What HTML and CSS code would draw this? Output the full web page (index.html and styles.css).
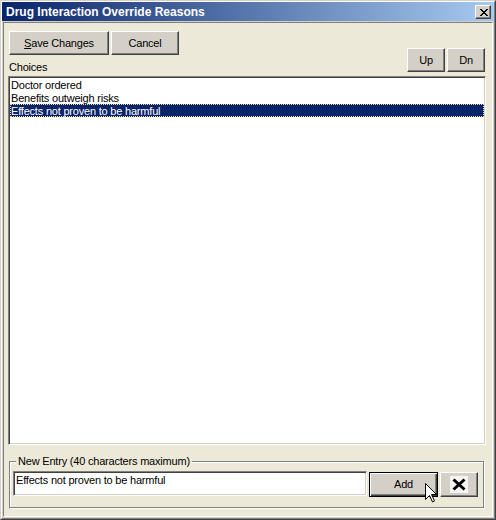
FILE: index.html
```html
<!DOCTYPE html>
<html lang="en">
<head>
<meta charset="utf-8">
<title>Drug Interaction Override Reasons</title>
<link rel="stylesheet" href="styles.css">
</head>
<body>
<div class="window">
  <div class="frame">
    <div class="titlebar">
      <span class="title">Drug Interaction Override Reasons</span>
      <button class="close" aria-label="Close">
        <svg width="8" height="7" viewBox="0 0 8 7" shape-rendering="crispEdges"><path d="M0 0h2v1H0z M6 0h2v1H6z M1 1h2v1H1z M5 1h2v1H5z M2 2h4v1H2z M3 3h2v1H3z M2 4h4v1H2z M1 5h2v1H1z M5 5h2v1H5z M0 6h2v1H0z M6 6h2v1H6z" fill="#000"/></svg>
      </button>
    </div>
    <div class="client">
      <div class="toolbar">
        <div class="left">
          <div class="btnrow">
            <button class="btn save"><u>S</u>ave Changes</button>
            <button class="btn cancel">Cancel</button>
          </div>
          <div class="label">Choices</div>
        </div>
        <div class="updn">
          <button class="btn small">Up</button>
          <button class="btn small">Dn</button>
        </div>
      </div>
      <ul class="listbox">
        <li>Doctor ordered</li>
        <li>Benefits outweigh risks</li>
        <li class="sel">Effects not proven to be harmful</li>
      </ul>
      <fieldset class="group">
        <legend>New Entry (40 characters maximum)</legend>
        <div class="entry">
          <div class="input">Effects not proven to be harmful</div>
          <button class="btn add">Add</button>
          <button class="btn del" aria-label="Delete">
            <svg width="18" height="17" viewBox="0 0 18 17"><rect x="0" y="0" width="18" height="17" fill="#f4f4f2"/><path d="M3.5 3.5 L14.5 13.5 M14.5 3.5 L3.5 13.5" stroke="#000" stroke-width="3"/></svg>
          </button>
        </div>
      </fieldset>
    </div>
  </div>
</div>
<svg class="cursor" width="13" height="20" viewBox="0 0 13 20"><path d="M0.5 0.5 V16.5 L4.5 12.5 L7.5 19 L9.5 18 L6.5 11.5 H11.5 Z" fill="#fff" stroke="#000" stroke-width="1" stroke-linejoin="miter"/></svg>
</body>
</html>
```
FILE: styles.css
```css
html, body {
  margin: 0;
  padding: 0;
}
body {
  font-family: "Liberation Sans", Arial, sans-serif;
  font-size: 11px;
  letter-spacing: -0.2px;
  color: #000;
  background: #fff;
}
.window {
  width: 496px;
  height: 520px;
  box-sizing: border-box;
  border: 1px solid;
  border-color: #d4d0c8 #404040 #404040 #d4d0c8;
  background: #d4d0c8;
}
.frame {
  height: 100%;
  box-sizing: border-box;
  border: 1px solid;
  border-color: #fff #808080 #808080 #fff;
  display: flex;
  flex-direction: column;
}
.titlebar {
  height: 19px;
  flex: none;
  display: flex;
  justify-content: space-between;
  align-items: flex-start;
  background: linear-gradient(to right, #0a246a, #a6caf0);
}
.title {
  color: #fff;
  font-weight: bold;
  font-size: 12px;
  letter-spacing: 0;
  line-height: 14px;
  padding: 3px 0 0 4px;
  white-space: nowrap;
}
.close {
  width: 16px;
  height: 14px;
  margin: 3px 3px 0 0;
  padding: 0 0 0 1px;
  box-sizing: border-box;
  border: 1px solid;
  border-color: #fff #404040 #404040 #fff;
  box-shadow: inset -1px -1px #808080;
  background: #d4d0c8;
  display: flex;
  align-items: center;
  justify-content: center;
}
.close svg {
  display: block;
}
.client {
  flex: 1;
  margin: 1px;
  border: 1px solid;
  border-color: #808080 #fff #fff #808080;
  background: #ece9d8;
  display: flex;
  flex-direction: column;
  min-height: 0;
}
.toolbar {
  display: flex;
  justify-content: space-between;
  align-items: flex-start;
  flex: none;
}
.left {
  margin: 8px 0 0 5px;
}
.btnrow {
  display: flex;
  gap: 2px;
}
.label {
  margin-top: 5px;
  line-height: 14px;
  height: 13px;
}
.updn {
  display: flex;
  gap: 2px;
  margin: 25px 7px 0 0;
}
.btn {
  font-family: "Liberation Sans", Arial, sans-serif;
  font-size: 11px;
  letter-spacing: -0.2px;
  line-height: 13px;
  color: #000;
  height: 24px;
  box-sizing: border-box;
  padding: 0;
  margin: 0;
  border: 1px solid;
  border-color: #fff #404040 #404040 #fff;
  box-shadow: inset -1px -1px #808080;
  background: #d4d0c8;
  display: flex;
  align-items: center;
  justify-content: center;
}
.btn u {
  text-decoration: underline;
}
.save {
  width: 100px;
}
.cancel {
  width: 68px;
}
.small {
  width: 38px;
}
.listbox {
  flex: 1;
  min-height: 0;
  list-style: none;
  margin: 3px 6px 0 4px;
  border: 1px solid;
  border-color: #808080 #fff #fff #808080;
  box-shadow: inset 1px 1px #404040, inset -1px -1px #d4d0c8;
  background: #fff;
  padding: 1px;
}
.listbox li {
  line-height: 14px;
  height: 13px;
  padding: 0 0 0 1px;
  white-space: nowrap;
}
.listbox li.sel {
  background: #0a246a;
  color: #fff;
  outline: 1px dotted #f5db95;
  outline-offset: -1px;
}
.group {
  flex: none;
  margin: 10px 8px 8px 5px;
  padding: 3px 5px 10px 3px;
  min-width: 0;
  border: 1px solid #808080;
  box-shadow: inset 1px 1px #fff, 1px 1px #fff;
}
.group legend {
  margin-left: 3px;
  padding: 0 2px;
  line-height: 13px;
  background: #ece9d8;
}
.entry {
  display: flex;
  gap: 2px;
  align-items: flex-start;
}
.input {
  flex: 1;
  height: 25px;
  box-sizing: border-box;
  border: 1px solid;
  border-color: #808080 #fff #fff #808080;
  box-shadow: inset 1px 1px #404040, inset -1px -1px #d4d0c8;
  background: #fff;
  padding: 1px 2px;
  line-height: 14px;
  white-space: nowrap;
  overflow: hidden;
}
.add {
  width: 69px;
  height: 25px;
  margin-top: 1px;
  border: 1px solid #000;
  box-shadow: inset 1px 1px #fff, inset -1px -1px #404040, inset -2px -2px #808080;
}
.del {
  width: 38px;
  height: 25px;
  margin-top: 1px;
}
.del svg {
  display: block;
}
.cursor {
  position: absolute;
  left: 425px;
  top: 483px;
}
```
